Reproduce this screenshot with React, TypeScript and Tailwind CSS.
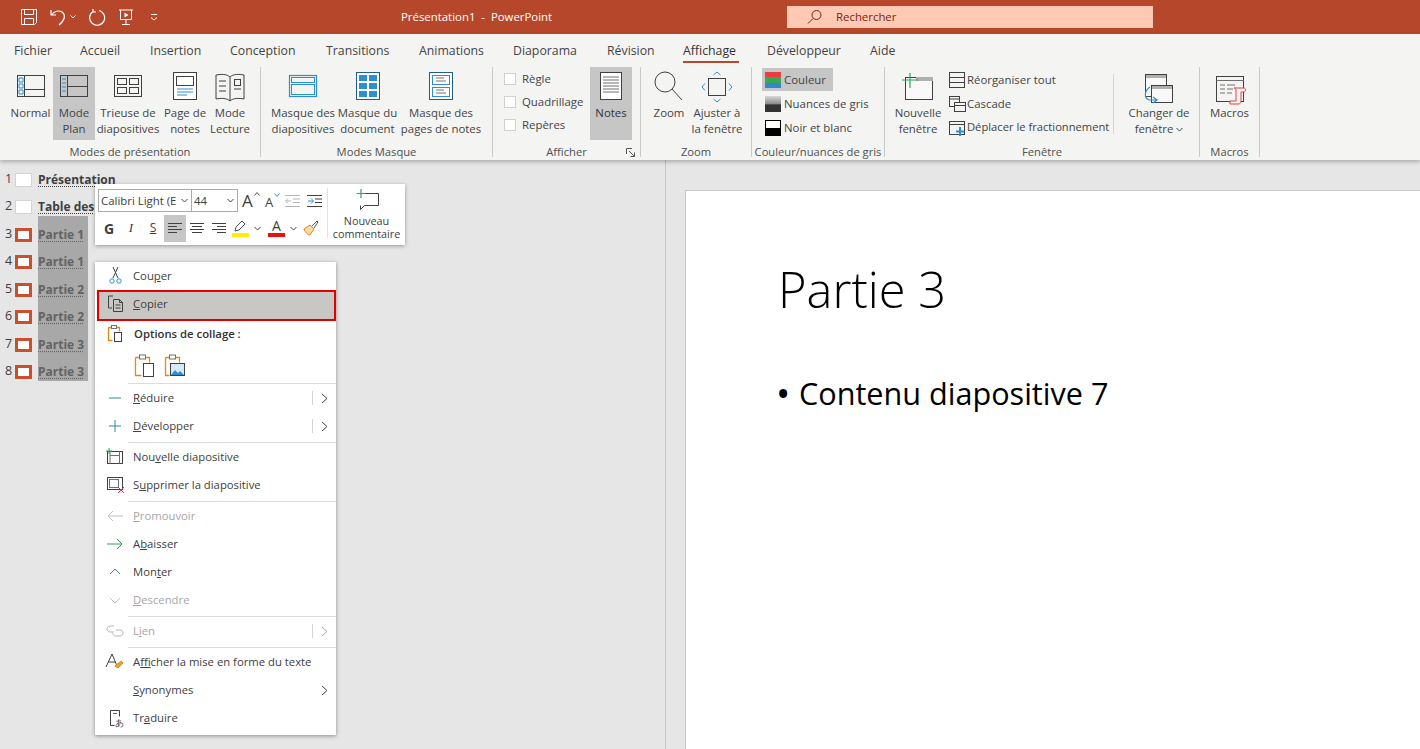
import type { ReactNode } from "react"

const UI = "font-['Open_Sans','Noto_Sans',sans-serif]"

function BigBtn({ w, active, icon, children }: { w: string; active?: boolean; icon: ReactNode; children: ReactNode }) {
  return (
    <div className={`${w} h-[73px] flex flex-col items-center shrink-0 ${active ? "bg-[#c6c6c6]" : ""}`}>
      <div className="h-[38px] w-full flex justify-center">{icon}</div>
      <div className="text-center leading-4 whitespace-nowrap">{children}</div>
    </div>
  )
}

function Group({ w, label, extra, children }: { w: string; label: string; extra?: ReactNode; children: ReactNode }) {
  return (
    <div className={`${w} h-[90px] shrink-0 flex flex-col relative border-r border-[#c9c9c9]`}>
      <div className="h-[72px] flex">{children}</div>
      <div className="h-[18px] pt-[7px] text-center text-[11.2px] leading-[11px] text-[#505050] whitespace-nowrap">{label}</div>
      {extra}
    </div>
  )
}

function Ic({ w = 44, children }: { w?: number; children: ReactNode }) {
  return (
    <svg width={w} height={38} viewBox={`0 0 ${w} 38`} fill="none" stroke="#404040" strokeWidth="1">
      {children}
    </svg>
  )
}

const B = "#2e8fd0"

function Small({ children }: { children: ReactNode }) {
  return (
    <svg width="18" height="18" viewBox="0 0 18 18" fill="none" stroke="#404040" className="shrink-0">
      {children}
    </svg>
  )
}

function Check({ label }: { label: string }) {
  return (
    <div className="h-[23px] flex items-center gap-[6px]">
      <span className="w-[12px] h-[12px] bg-white border border-[#d0d0d0]" />
      <span>{label}</span>
    </div>
  )
}

function Ribbon() {
  return (
    <div className="h-[126px] bg-[#f4f4f2] shadow-[0_2px_4px_rgba(0,0,0,0.25)] relative z-10 text-[11.4px] text-[#444444] shrink-0">
      <div className="h-[33px] pl-[14px] flex items-center text-[12.3px] pt-[1px]">
        <span className="w-[66px]">Fichier</span>
        <span className="w-[70px]">Accueil</span>
        <span className="w-[80px]">Insertion</span>
        <span className="w-[96px]">Conception</span>
        <span className="w-[93px]">Transitions</span>
        <span className="w-[94px]">Animations</span>
        <span className="w-[94px]">Diaporama</span>
        <span className="w-[76px]">Révision</span>
        <span className="w-[84px] relative font-medium text-[#333333]">
          Affichage
          <span className="absolute left-0 top-[19px] w-[56px] h-[2px] bg-[#b7472a]" />
        </span>
        <span className="w-[103px]">Développeur</span>
        <span>Aide</span>
      </div>

      <div className="flex">
        <Group w="w-[261px]" label="Modes de présentation">
          <div className="w-[8px]" />
          <BigBtn w="w-[45px]" icon={
            <Ic>
              <rect x="8.5" y="8.5" width="27" height="21" />
              <path d="M15.5 8.5v21M15.5 22.5h20" />
              <path d="M10 11h4v4h-4zM10 17h4v4h-4zM10 23h4v4h-4z" stroke={B} />
            </Ic>
          }>Normal</BigBtn>
          <BigBtn w="w-[42px]" active icon={
            <Ic w={42}>
              <rect x="7.5" y="8.5" width="27" height="21" />
              <path d="M14.5 8.5v21M14.5 19.5h20" />
              <path d="M9 12h4M9 16h4M9 20h4M9 24h4" stroke={B} />
            </Ic>
          }>Mode<br />Plan</BigBtn>
          <BigBtn w="w-[66px]" icon={
            <Ic w={66}>
              <rect x="19.5" y="8.5" width="27" height="21" />
              <rect x="22.5" y="11.5" width="9" height="6" />
              <rect x="34.5" y="11.5" width="9" height="6" />
              <rect x="22.5" y="20.5" width="9" height="6" />
              <rect x="34.5" y="20.5" width="9" height="6" />
            </Ic>
          }>Trieuse de<br />diapositives</BigBtn>
          <BigBtn w="w-[48px]" icon={
            <Ic w={48}>
              <rect x="12.5" y="5.5" width="23" height="27" fill="#fff" />
              <rect x="15.5" y="9.5" width="17" height="9" />
              <path d="M16 22h16M16 25h16M16 28h10" stroke={B} />
            </Ic>
          }>Page de<br />notes</BigBtn>
          <BigBtn w="w-[42px]" icon={
            <Ic w={42}>
              <path d="M21 10c-3-3-9-3-14-2v24c5-1 11-1 14 2c3-3 9-3 14-2V8c-5-1-11-1-14 2zM21 10v24" />
              <path d="M10 14h7M10 19h7M10 24h7M25 22h7" />
              <rect x="25.5" y="12.5" width="6" height="6" />
            </Ic>
          }>Mode<br />Lecture</BigBtn>
        </Group>

        <Group w="w-[232px]" label="Modes Masque">
          <div className="w-[9px]" />
          <BigBtn w="w-[66px]" icon={
            <Ic w={66}>
              <rect x="19.5" y="8.5" width="27" height="21" stroke={B} strokeWidth="1.2" />
              <rect x="21.5" y="10.5" width="23" height="5" stroke={B} />
              <rect x="21.5" y="17.5" width="23" height="10" stroke={B} />
            </Ic>
          }>Masque des<br />diapositives</BigBtn>
          <BigBtn w="w-[63px]" icon={
            <Ic w={63}>
              <rect x="20.5" y="5.5" width="23" height="27" fill="#fff" stroke="#1f5d8c" />
              <g fill={B} stroke="none">
                <rect x="23" y="8" width="8" height="6" />
                <rect x="33" y="8" width="8" height="6" />
                <rect x="23" y="16" width="8" height="6" />
                <rect x="33" y="16" width="8" height="6" />
                <rect x="23" y="24" width="8" height="6" />
                <rect x="33" y="24" width="8" height="6" />
              </g>
            </Ic>
          }>Masque du<br />document</BigBtn>
          <BigBtn w="w-[84px]" icon={
            <Ic w={84}>
              <rect x="30.5" y="5.5" width="23" height="27" fill="#fff" stroke="#1f5d8c" />
              <rect x="33.5" y="8.5" width="17" height="9" stroke={B} />
              <rect x="33.5" y="20.5" width="17" height="9" stroke={B} />
              <path d="M37 11h8M37 14h10M37 23h8M37 26h10" stroke="#707070" />
            </Ic>
          }>Masque des<br />pages de notes</BigBtn>
        </Group>

        <Group w="w-[148px]" label="Afficher" extra={
          <svg width="9" height="9" viewBox="0 0 9 9" fill="none" stroke="#555555" className="absolute right-[5px] bottom-[0px]">
            <path d="M.5 6V.5H6M3 3l5 5M8.5 4.5v4h-4" />
          </svg>
        }>
          <div className="w-[11px]" />
          <div className="w-[86px]">
            <Check label="Règle" />
            <Check label="Quadrillage" />
            <Check label="Repères" />
          </div>
          <BigBtn w="w-[42px]" active icon={
            <Ic w={42}>
              <rect x="10.5" y="5.5" width="21" height="27" fill="#fff" />
              <path d="M13 10h16M13 13h16M13 16h16M13 19h16M13 22h16M13 25h16" stroke="#707070" />
            </Ic>
          }>
            <span className="text-[#333333]">Notes</span>
          </BigBtn>
        </Group>

        <Group w="w-[111px]" label="Zoom">
          <div className="w-[4px]" />
          <BigBtn w="w-[48px]" icon={
            <Ic w={48}>
              <circle cx="20" cy="15" r="10" />
              <path d="M27 22l10 11" />
            </Ic>
          }>Zoom</BigBtn>
          <BigBtn w="w-[48px]" icon={
            <Ic w={48}>
              <rect x="15.5" y="11.5" width="17" height="17" />
              <path d="M20.5 8l3.5-3l3.5 3M20.5 32l3.5 3l3.5-3M12 16.5l-3 3.5l3 3.5M36 16.5l3 3.5l-3 3.5" stroke={B} />
            </Ic>
          }>Ajuster à<br />la fenêtre</BigBtn>
        </Group>

        <Group w="w-[133px]" label="Couleur/nuances de gris">
          <div className="pl-[10px] pt-[1px] w-full">
            <div className="h-[23px] w-[71px] bg-[#c6c6c6] flex items-center gap-[3px] pl-[3px]">
              <span className="w-4 h-4 bg-[linear-gradient(#e84040_0_33%,#3aa655_33%_66%,#2f88d0_66%)]" />
              <span>Couleur</span>
            </div>
            <div className="h-[25px] flex items-center gap-[3px] pl-[3px]">
              <span className="w-4 h-4 bg-[linear-gradient(#d8d8d8,#8a8a8a_50%,#333333_55%)]" />
              <span className="whitespace-nowrap">Nuances de gris</span>
            </div>
            <div className="h-[23px] flex items-center gap-[3px] pl-[3px]">
              <span className="w-4 h-4 border border-black bg-[linear-gradient(#ffffff_0_50%,#000000_50%)]" />
              <span>Noir et blanc</span>
            </div>
          </div>
        </Group>

        <Group w="w-[315px]" label="Fenêtre">
          <div className="w-[3px]" />
          <BigBtn w="w-[60px]" icon={
            <Ic w={60}>
              <rect x="17.5" y="10.5" width="27" height="22" fill="#f9f9f9" />
              <rect x="28" y="10" width="17" height="4" fill="#b0b0b0" stroke="none" />
              <path d="M22 6v15M14 13h16" stroke="#2ea35f" strokeWidth="1.2" />
            </Ic>
          }>Nouvelle<br />fenêtre</BigBtn>
          <div className="w-[165px] pt-[1px]">
            <div className="h-[23px] flex items-center gap-[1px]">
              <Small>
                <rect x="1.5" y="1.5" width="15" height="15" />
                <path d="M1.5 6.5h15M1.5 11.5h15" />
              </Small>
              <span>Réorganiser tout</span>
            </div>
            <div className="h-[25px] flex items-center gap-[1px]">
              <Small>
                <rect x="1.5" y="1.5" width="10" height="10" />
                <path d="M1.5 4h10" />
                <rect x="6.5" y="7.5" width="11" height="9" fill="#f4f4f2" />
                <path d="M6.5 10.5h11" />
              </Small>
              <span>Cascade</span>
            </div>
            <div className="h-[23px] flex items-center gap-[1px]">
              <Small>
                <rect x="1.5" y="2.5" width="15" height="13" />
                <path d="M1.5 5.5h15" />
                <path d="M12 8v9M8 12.5h8" stroke={B} strokeWidth="2" />
              </Small>
              <span className="whitespace-nowrap text-[11.2px]">Déplacer le fractionnement</span>
            </div>
          </div>
          <div className="w-[1px] h-[60px] mt-[7px] bg-[#d4d4d4]" />
          <div className="w-[5px]" />
          <BigBtn w="w-[80px]" icon={
            <Ic w={80}>
              <rect x="26.5" y="7.5" width="21" height="22" fill="#f9f9f9" />
              <rect x="27" y="8" width="20" height="3" fill="#b0b0b0" stroke="none" />
              <rect x="32.5" y="18.5" width="21" height="17" fill="#f9f9f9" />
              <rect x="33" y="19" width="20" height="3" fill="#b0b0b0" stroke="none" />
              <path d="M31 20c-6 4-6 11-1 13h8M34 30l4 3l-4 3" stroke={B} strokeWidth="1.2" />
            </Ic>
          }>
            Changer de<br />fenêtre
            <svg width="7" height="5" viewBox="0 0 7 5" fill="none" stroke="#444444" className="inline ml-[3px] mb-[1px]">
              <path d="M.5 1l3 3l3-3" />
            </svg>
          </BigBtn>
        </Group>

        <Group w="w-[60px]" label="Macros">
          <BigBtn w="w-[59px]" icon={
            <Ic w={59}>
              <rect x="16.5" y="9.5" width="27" height="25" />
              <path d="M16.5 13.5h27M20 18h5M27 18h8M20 22h5M27 22h6M20 26h5M27 26h5" stroke="#707070" />
              <path d="M34 21h10c2 0 2 4 0 4h-3v9c0 2-1 3-3 3h-8v-3h6V23c0-1-1-2-2-2z" fill="#f4f4f2" stroke="#e0404a" />
            </Ic>
          }>Macros</BigBtn>
        </Group>
      </div>
    </div>
  )
}

function TitleBar() {
  return (
    <div className="h-[34px] bg-[#b7472a] flex items-center text-white shrink-0">
      <div className="w-[401px] shrink-0 flex items-center pl-[20px]">
        <svg width="18" height="18" viewBox="0 0 18 18" fill="none" stroke="#fff">
          <path d="M1.5 1.5h15v13l-2 2h-13zM4.5 1.5v5h9v-5M4.5 16.5v-6h9v6" />
        </svg>
        <svg width="18" height="18" viewBox="0 0 18 18" fill="none" stroke="#fff" className="ml-[12px]">
          <path d="M1 2v5h5M1.5 7C4 3 9 2 12 4c4 3 3 8-3 13" strokeWidth="1.2" />
        </svg>
        <svg width="6" height="4" viewBox="0 0 6 4" fill="none" stroke="#fff" className="ml-[2px]">
          <path d="M.5 .5l2.5 2.5l2.5-2.5" />
        </svg>
        <svg width="18" height="18" viewBox="0 0 18 18" fill="none" stroke="#fff" className="ml-[12px]">
          <path d="M11 2.5A7.5 7.5 0 1 1 5 3.5M5 1v3h3" strokeWidth="1.2" />
        </svg>
        <svg width="18" height="18" viewBox="0 0 18 18" fill="none" stroke="#fff" className="ml-[11px]">
          <path d="M2 2h14M3.5 2v9.5h11V2M9 11.5v5M5 16.5h8" />
          <path d="M7.5 4.5l4 2.5l-4 2.5z" fill="#fff" stroke="none" />
        </svg>
        <svg width="8" height="8" viewBox="0 0 8 8" fill="none" stroke="#fff" className="ml-[15px]">
          <path d="M1 1.5h6M1 4.5l3 2.5l3-2.5" />
        </svg>
      </div>
      <div className="w-[386px] shrink-0 text-[11.4px]">Présentation1&nbsp; -&nbsp; PowerPoint</div>
      <div className="w-[366px] h-[22px] bg-[#ffc9b3] flex items-center pl-[20px] text-[11.4px] text-[#7a2410] shrink-0">
        <svg width="16" height="16" viewBox="0 0 16 16" fill="none" stroke="#6a2a18">
          <circle cx="9.5" cy="6" r="4.5" />
          <path d="M6 9.5l-5 5" />
        </svg>
        <span className="ml-[13px]">Rechercher</span>
      </div>
    </div>
  )
}

function OutlineRow({ n, title, sel }: { n: number; title: string; sel?: boolean }) {
  return (
    <div className="h-[27.5px] flex items-end text-[12px] leading-[18px]">
      <span className="w-[15px] pl-[5px] text-[12.5px] text-[#404040] font-normal mb-[1px]">{n}</span>
      <span className={`w-[17px] h-[14px] mb-[2px] ${sel ? "border-[3px] border-[#c8502d] bg-white" : "border border-[#d4d4d4] bg-white"}`} />
      <div className="w-[6px]" />
      <span className={`h-full w-[50px] flex items-end whitespace-nowrap font-bold ${sel ? "bg-[#a8a8a8] text-[#636363]" : "text-[#404040]"}`}>
        <span className="underline decoration-dotted underline-offset-2">{title}</span>
      </span>
    </div>
  )
}

function MiniToolbar() {
  return (
    <div className="absolute left-[95px] top-[24px] w-[310px] h-[61px] bg-white shadow-[0_1px_4px_rgba(0,0,0,0.35)] flex text-[#404040] text-[11.4px] z-20">
      <div className="w-[232px] pl-[3px] pt-[5px]">
        <div className="flex items-center h-[23px]">
          <div className="w-[94px] h-[23px] border border-[#ababab] flex items-center pl-[2px] justify-between pr-[3px] whitespace-nowrap">
            <span>Calibri Light (E</span>
            <svg width="7" height="5" viewBox="0 0 7 5" fill="none" stroke="#444444" className="shrink-0"><path d="M.5 1l3 3l3-3" /></svg>
          </div>
          <div className="w-[46px] h-[23px] border border-l-0 border-[#ababab] flex items-center pl-[2px] justify-between pr-[3px]">
            <span>44</span>
            <svg width="7" height="5" viewBox="0 0 7 5" fill="none" stroke="#444444"><path d="M.5 1l3 3l3-3" /></svg>
          </div>
          <span className="ml-[4px] w-[23px] text-[17px] leading-none relative">A<svg width="6" height="4" viewBox="0 0 6 4" fill="none" stroke="#555" className="absolute left-[12px] top-0"><path d="M.5 3.5l2.5-3l2.5 3" /></svg></span>
          <span className="w-[21px] text-[13px] leading-none relative pt-[3px]">A<svg width="6" height="4" viewBox="0 0 6 4" fill="none" stroke={B} className="absolute left-[9px] top-0"><path d="M.5 .5l2.5 3l2.5-3" /></svg></span>
          <svg width="16" height="14" viewBox="0 0 16 14" fill="none" stroke="#b5b5b5" className="ml-[-1px]"><path d="M0 1.5h15M8 5h7M8 8.5h7M0 12.5h15M1 7h5M3 4.5L.5 7L3 9.5" /></svg>
          <svg width="16" height="14" viewBox="0 0 16 14" fill="none" stroke="#404040" className="ml-[6px]"><path d="M0 1.5h15M8 5h7M8 8.5h7M0 12.5h15" /><path d="M1 7h5M4 4.5L6.5 7L4 9.5" stroke={B} /></svg>
        </div>
        <div className="flex items-center mt-[2px] h-[28px]">
          <span className="w-[22px] text-center font-bold text-[14px]">G</span>
          <span className="w-[22px] text-center italic text-[13px] font-['Liberation_Serif',serif]">I</span>
          <span className="w-[22px] text-center underline text-[12px]">S</span>
          <span className="w-[22px] h-[27px] bg-[#c6c6c6] flex items-center justify-center">
            <svg width="16" height="13" viewBox="0 0 16 13" fill="none" stroke="#404040"><path d="M1 1.5h14M1 4.5h9M1 7.5h14M1 10.5h9" /></svg>
          </span>
          <span className="w-[22px] flex justify-center">
            <svg width="16" height="13" viewBox="0 0 16 13" fill="none" stroke="#404040"><path d="M1 1.5h14M3 4.5h10M1 7.5h14M3 10.5h10" /></svg>
          </span>
          <span className="w-[22px] flex justify-center">
            <svg width="16" height="13" viewBox="0 0 16 13" fill="none" stroke="#404040"><path d="M1 1.5h14M6 4.5h9M1 7.5h14M6 10.5h9" /></svg>
          </span>
          <svg width="17" height="18" viewBox="0 0 17 18" fill="none" className="ml-[2px]">
            <path d="M3 12l1-4l6-6l3 3l-6 6z" stroke="#505050" />
            <rect x="0" y="14" width="17" height="4" fill="#ffee00" />
          </svg>
          <svg width="7" height="5" viewBox="0 0 7 5" fill="none" stroke="#444444" className="ml-[5px]"><path d="M.5 1l3 3l3-3" /></svg>
          <span className="ml-[7px] w-[17px] flex flex-col items-center">
            <span className="text-[14px] leading-[14px]">A</span>
            <span className="w-[17px] h-[4px] bg-[#e81010]" />
          </span>
          <svg width="7" height="5" viewBox="0 0 7 5" fill="none" stroke="#444444" className="ml-[5px]"><path d="M.5 1l3 3l3-3" /></svg>
          <svg width="16" height="16" viewBox="0 0 16 16" fill="none" className="ml-[6px]">
            <path d="M1 9l6-4l4 4l-4 6c-2 0-5-3-6-6z" fill="#f7d9a8" stroke="#d98a20" />
            <path d="M9 6l5-5l1 1l-4 6" stroke="#505050" />
          </svg>
        </div>
      </div>
      <div className="w-[1px] h-[50px] mt-[4px] bg-[#e2e2e2]" />
      <div className="flex-1 flex flex-col items-center pt-[5px]">
        <svg width="24" height="22" viewBox="0 0 24 22" fill="none" stroke="#404040">
          <path d="M5.5 4.5h18v12h-14l-4 4v-4" />
          <path d="M6 0v9M1.5 4.5h9" stroke="#2ea35f" strokeWidth="1.2" />
        </svg>
        <div className="text-[10.8px] leading-[13px] text-center whitespace-nowrap mt-[3px]">Nouveau<br />commentaire</div>
      </div>
    </div>
  )
}

function MenuItem({ icon, children, off, arrow, bar, active }: { icon?: ReactNode; children: ReactNode; off?: boolean; arrow?: boolean; bar?: boolean; active?: boolean }) {
  return (
    <div className={`h-[28px] flex items-center pl-[10px] relative ${off ? "text-[#a6a6a6]" : "text-[#404040]"}`}>
      {active && <div className="absolute left-[2px] top-0 right-0 h-[31px] bg-[#c9c7c3] border-2 border-[#e00000]" />}
      <span className="w-[20px] h-[20px] relative shrink-0">{icon}</span>
      <span className="ml-[8px] relative whitespace-nowrap">{children}</span>
      {arrow && (
        <span className={`absolute right-[8px] top-[7px] h-[14px] flex items-center pl-[8px] ${bar ? "border-l border-[#d4d4d4]" : ""}`}>
          <svg width="7" height="11" viewBox="0 0 7 11" fill="none" stroke={off ? "#a6a6a6" : "#404040"}><path d="M1 1l5 4.5l-5 4.5" /></svg>
        </span>
      )}
    </div>
  )
}

function Sv({ children }: { children: ReactNode }) {
  return <svg width="20" height="20" viewBox="0 0 20 20" fill="none" stroke="#404040">{children}</svg>
}

const Sep = () => <div className="h-[1px] bg-[#dcdcdc] ml-[33px] mt-[2px] box-content" />

function ContextMenu() {
  return (
    <div className="absolute left-[95px] top-[102px] w-[241px] bg-white shadow-[0_1px_4px_rgba(0,0,0,0.4)] text-[11.3px] z-20 pb-[3px]">
      <MenuItem icon={
        <Sv>
          <path d="M8 1l5 11M13 1L8 12" />
          <circle cx="7" cy="15" r="2.2" stroke={B} />
          <circle cx="14" cy="15" r="2.2" stroke={B} />
        </Sv>
      }><>Cou<u>p</u>er</></MenuItem>
      <MenuItem active icon={
        <Sv>
          <path d="M8 2H3.5v12H7" />
          <path d="M8.5 5.5h6l3 3v9h-9zM14.5 5.5v3h3M10.5 11h5M10.5 14h5" />
        </Sv>
      }><><u>C</u>opier</></MenuItem>
      <div className="h-[2px]" />
      <div className="h-[28px] flex items-center pl-[10px] text-[#333333] font-semibold">
        <span className="w-[20px] h-[20px]">
          <Sv>
            <path d="M3.5 3.5h11v4M3.5 3.5v13h4" stroke="#e08a10" strokeWidth="1.3" />
            <rect x="6.5" y="1.5" width="5" height="3" fill="#fff" stroke="#707070" />
            <rect x="9.5" y="8.5" width="7" height="9" />
          </Sv>
        </span>
        <span className="ml-[9px]">Options de collage :</span>
      </div>
      <div className="h-[33px] flex items-center pl-[39px] pt-[2px] gap-[8px]">
        <svg width="22" height="24" viewBox="0 0 22 24" fill="none">
          <path d="M1.5 3.5h14v5M1.5 3.5v18h6" stroke="#e08a10" strokeWidth="1.3" />
          <rect x="5.5" y="1" width="6" height="4" fill="#fff" stroke="#707070" />
          <rect x="9.5" y="9.5" width="10" height="13" fill="#fff" stroke="#404040" />
        </svg>
        <svg width="22" height="24" viewBox="0 0 22 24" fill="none">
          <path d="M1.5 3.5h14v5M1.5 3.5v18h4" stroke="#e08a10" strokeWidth="1.3" />
          <rect x="5.5" y="1" width="6" height="4" fill="#fff" stroke="#707070" />
          <rect x="6.5" y="9.5" width="14" height="12" fill="#d6e9f8" stroke="#404040" />
          <path d="M7 21l4-5l3 3l2-2l4 4z" fill={B} />
        </svg>
      </div>
      <Sep />
      <MenuItem arrow bar icon={<Sv><path d="M4 10h12" stroke="#2b8c9c" /></Sv>}><><u>R</u>éduire</></MenuItem>
      <MenuItem arrow bar icon={<Sv><path d="M4 10h12M10 4v12" stroke="#2b8c9c" /></Sv>}><><u>D</u>évelopper</></MenuItem>
      <Sep />
      <MenuItem icon={
        <Sv>
          <rect x="2.5" y="4.5" width="15" height="12" />
          <path d="M5 4.5v12M14.5 4.5v12M5 8.5h9.5" stroke="#707070" />
          <path d="M4 1v6M1 4h6" stroke="#2ea35f" />
        </Sv>
      }><>Nou<u>v</u>elle diapositive</></MenuItem>
      <MenuItem icon={
        <Sv>
          <rect x="2.5" y="2.5" width="15" height="12" />
          <rect x="4.5" y="4.5" width="9" height="8" stroke="#707070" />
          <path d="M13 12l6 6M19 12l-6 6" stroke="#e0303a" />
        </Sv>
      }><>S<u>u</u>pprimer la diapositive</></MenuItem>
      <Sep />
      <MenuItem off icon={<Sv><path d="M18 10H3M8 5l-5 5l5 5" stroke="#c0c0c0" /></Sv>}><><u>P</u>romouvoir</></MenuItem>
      <MenuItem icon={<Sv><path d="M2 10h15M12 5l5 5l-5 5" stroke="#2ea35f" /></Sv>}><>A<u>b</u>aisser</></MenuItem>
      <MenuItem icon={<Sv><path d="M5 12l5-5l5 5" stroke="#3d7fb5" /></Sv>}><>Mon<u>t</u>er</></MenuItem>
      <MenuItem off icon={<Sv><path d="M5 8l5 5l5-5" stroke="#c0c0c0" /></Sv>}><><u>D</u>escendre</></MenuItem>
      <Sep />
      <MenuItem off arrow bar icon={
        <Sv>
          <path d="M9 5H5C1 5 1 11 5 11h2M11 9h4c4 0 4 6 0 6h-4c-3 0-4-3-3-5" stroke="#b8b8b8" />
        </Sv>
      }><>L<u>i</u>en</></MenuItem>
      <Sep />
      <MenuItem icon={
        <Sv>
          <path d="M1 15L7 2l5 12M3.5 10h7" />
          <path d="M10 14l6-5l2 2l-5 5z" fill="#f0a030" stroke="#d98a20" />
        </Sv>
      }><>A<u>f</u>ficher la mise en forme du texte</></MenuItem>
      <MenuItem arrow><><u>S</u>ynonymes</></MenuItem>
      <MenuItem icon={
        <Sv>
          <path d="M5.5 2.5h9v6M5.5 2.5v15h4" />
          <path d="M8 5.5h4" stroke="#e0303a" />
          <text x="10" y="18" fontSize="9" fill="#404040" stroke="none">あ</text>
        </Sv>
      }><>Tr<u>a</u>duire</></MenuItem>
    </div>
  )
}

export default function App() {
  return (
    <div className={`w-[1420px] h-[749px] overflow-hidden flex flex-col bg-[#e6e6e6] ${UI}`}>
      <TitleBar />
      <Ribbon />
      <div className="flex-1 flex min-h-0 relative">
        <div className="w-[666px] shrink-0 border-r border-[#c8c8c8] pt-[1px]">
          <OutlineRow n={1} title="Présentation" />
          <OutlineRow n={2} title="Table des" />
          <OutlineRow n={3} title="Partie 1" sel />
          <OutlineRow n={4} title="Partie 1" sel />
          <OutlineRow n={5} title="Partie 2" sel />
          <OutlineRow n={6} title="Partie 2" sel />
          <OutlineRow n={7} title="Partie 3" sel />
          <OutlineRow n={8} title="Partie 3" sel />
        </div>
        <MiniToolbar />
        <ContextMenu />
        <div className="flex-1 pl-[19px] pt-[30px] min-w-0">
          <div className="h-full bg-white border-t border-l border-[#c8c8c8] pl-[92px] pt-[64px] text-black">
            <div className="text-[48.8px] leading-[68px] font-light">Partie 3</div>
            <div className="mt-[50px] flex items-center text-[30.6px] leading-[40px]">
              <span className="w-[23px] -ml-[2px] text-[38px] leading-[40px]">•</span>
              <span>Contenu diapositive 7</span>
            </div>
          </div>
        </div>
      </div>
    </div>
  )
}
